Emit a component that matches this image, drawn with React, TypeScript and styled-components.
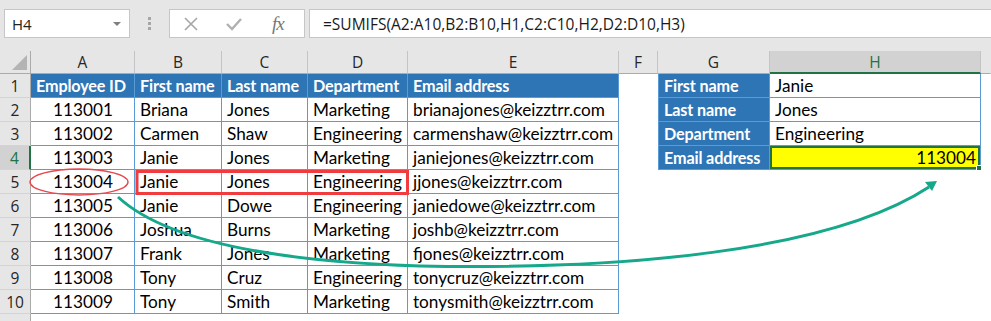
import React from "react";
import styled, { createGlobalStyle } from "styled-components";

const GlobalStyle = createGlobalStyle`
  html, body {
    margin: 0;
    padding: 0;
    background: #ffffff;
  }
`;

const Page = styled.div`
  position: relative;
  width: 991px;
  height: 321px;
  overflow: hidden;
  background: #ffffff;
`;

const FormulaBar = styled.div`
  height: 51px;
  box-sizing: border-box;
  padding: 9px 0 0 4px;
  background: #e6e6e6;
  display: flex;
  align-items: flex-start;
  font-family: "Open Sans", "Noto Sans", sans-serif;
`;

const NameBox = styled.div`
  width: 126px;
  height: 29px;
  box-sizing: border-box;
  padding: 0 8px 0 7px;
  background: #ffffff;
  border: 1px solid #c6c6c6;
  display: flex;
  align-items: center;
  justify-content: space-between;
  font-size: 15px;
  color: #222222;
`;

const Caret = styled.span`
  width: 0;
  height: 0;
  border-left: 4px solid transparent;
  border-right: 4px solid transparent;
  border-top: 4px solid #7f7f7f;
`;

const Grip = styled.div`
  width: 39px;
  height: 29px;
  display: flex;
  flex-direction: column;
  align-items: center;
  justify-content: center;
  gap: 2px;
  span {
    width: 3px;
    height: 3px;
    background: #a6a6a6;
  }
`;

const FxBox = styled.div`
  width: 136px;
  height: 29px;
  box-sizing: border-box;
  background: #ffffff;
  border: 1px solid #c6c6c6;
  display: flex;
  align-items: center;
  gap: 28px;
  padding-left: 14px;
`;

const FxLabel = styled.span`
  font-family: "Liberation Serif", serif;
  font-style: italic;
  font-size: 19px;
  color: #777777;
  letter-spacing: -1px;
  margin-left: 2px;
`;

const FormulaInput = styled.div`
  flex: 1;
  height: 29px;
  margin-left: 4px;
  box-sizing: border-box;
  padding-left: 13px;
  background: #ffffff;
  border: 1px solid #c6c6c6;
  border-right: none;
  display: flex;
  align-items: center;
  font-size: 15.5px;
  color: #1a1a1a;
  white-space: nowrap;
`;

const Sheet = styled.div`
  display: grid;
  grid-template-columns: 31px 104px 87px 86px 100px 211px 39px 112px 211px 10px;
  grid-template-rows: 23px repeat(11, 24px);
  font-family: Lato, "Liberation Sans", sans-serif;
  font-size: 17.2px;
`;

const Corner = styled.div`
  position: relative;
  background: #e6e6e6;
  border-right: 1px solid #ababab;
  border-bottom: 1px solid #ababab;
  &::after {
    content: "";
    position: absolute;
    right: 3px;
    bottom: 3px;
    border-left: 15px solid transparent;
    border-bottom: 15px solid #b4b4b4;
  }
`;

const ColHead = styled.div<{ $selected?: boolean; $last?: boolean }>`
  box-sizing: border-box;
  display: flex;
  align-items: center;
  justify-content: center;
  font-family: "Open Sans", "Noto Sans", sans-serif;
  font-size: 15.5px;
  background: ${(p) => (p.$selected ? "#d2d2d2" : "#e6e6e6")};
  color: ${(p) => (p.$selected ? "#217346" : "#262626")};
  border-right: 1px solid ${(p) => (p.$last ? "transparent" : "#c4c4c4")};
  border-bottom: ${(p) => (p.$selected ? "2px solid #217346" : "1px solid #ababab")};
`;

const RowHead = styled.div<{ $selected?: boolean }>`
  box-sizing: border-box;
  display: flex;
  align-items: center;
  justify-content: center;
  font-family: "Open Sans", "Noto Sans", sans-serif;
  font-size: 15.5px;
  background: ${(p) => (p.$selected ? "#d2d2d2" : "#e6e6e6")};
  color: ${(p) => (p.$selected ? "#217346" : "#262626")};
  border-bottom: 1px solid #d4d4d4;
  border-right: ${(p) => (p.$selected ? "2px solid #217346" : "1px solid #ababab")};
`;

type Kind = "head" | "data" | "blank";

const Cell = styled.div<{
  $kind: Kind;
  $align?: "left" | "center" | "right";
  $edge?: boolean;
  $fill?: string;
  $active?: boolean;
}>`
  position: relative;
  box-sizing: border-box;
  display: flex;
  align-items: center;
  padding: 0 4px 0 5px;
  white-space: nowrap;
  overflow: visible;
  justify-content: ${(p) =>
    p.$align === "center" ? "center" : p.$align === "right" ? "flex-end" : "flex-start"};
  background: ${(p) => (p.$fill ? p.$fill : p.$kind === "head" ? "#2e75b6" : "#ffffff")};
  color: ${(p) => (p.$kind === "head" ? "#ffffff" : "#000000")};
  font-weight: ${(p) => (p.$kind === "head" ? 700 : 400)};
  font-size: ${(p) => (p.$kind === "head" ? "16.2px" : "inherit")};
  letter-spacing: ${(p) => (p.$kind === "head" ? "-0.15px" : "normal")};
  border-right: 1px solid ${(p) => (p.$kind === "blank" ? "transparent" : "#5b9bd5")};
  border-bottom: 1px solid ${(p) => (p.$kind === "blank" ? "transparent" : "#5b9bd5")};
  border-left: ${(p) => (p.$edge ? "1px solid #5b9bd5" : "none")};
  box-shadow: ${(p) => (p.$active ? "inset 0 0 0 2px #217346, 1px 1px 0 0 #217346" : "none")};
`;

const FillHandle = styled.span`
  position: absolute;
  right: -4px;
  bottom: -4px;
  width: 6px;
  height: 6px;
  background: #217346;
  border: 1px solid #ffffff;
`;

const Overlay = styled.svg`
  position: absolute;
  left: 0;
  top: 0;
  pointer-events: none;
`;

const columns = ["A", "B", "C", "D", "E", "F", "G", "H"];

const employees = [
  ["113001", "Briana", "Jones", "Marketing", "brianajones@keizztrr.com"],
  ["113002", "Carmen", "Shaw", "Engineering", "carmenshaw@keizztrr.com"],
  ["113003", "Janie", "Jones", "Marketing", "janiejones@keizztrr.com"],
  ["113004", "Janie", "Jones", "Engineering", "jjones@keizztrr.com"],
  ["113005", "Janie", "Dowe", "Engineering", "janiedowe@keizztrr.com"],
  ["113006", "Joshua", "Burns", "Marketing", "joshb@keizztrr.com"],
  ["113007", "Frank", "Jones", "Marketing", "fjones@keizztrr.com"],
  ["113008", "Tony", "Cruz", "Engineering", "tonycruz@keizztrr.com"],
  ["113009", "Tony", "Smith", "Marketing", "tonysmith@keizztrr.com"],
];

const headers = ["Employee ID", "First name", "Last name", "Department", "Email address"];

const lookup = [
  ["First name", "Janie"],
  ["Last name", "Jones"],
  ["Department", "Engineering"],
  ["Email address", "113004"],
];

function XIcon() {
  return (
    <svg width="14" height="14" viewBox="0 0 14 14">
      <path d="M1 1 L13 13 M13 1 L1 13" stroke="#a6a6a6" strokeWidth="1.6" fill="none" />
    </svg>
  );
}

function CheckIcon() {
  return (
    <svg width="16" height="14" viewBox="0 0 16 14">
      <path d="M1 7 L6 12 L15 2" stroke="#b0b0b0" strokeWidth="2.4" fill="none" />
    </svg>
  );
}

export default function App() {
  const rows: React.ReactNode[] = [];

  for (let r = 1; r <= 11; r++) {
    const emp = r >= 2 && r <= 10 ? employees[r - 2] : null;
    const look = r <= 4 ? lookup[r - 1] : null;
    // row 11 only peeks in at the bottom edge, its number is out of view
    rows.push(
      <RowHead key={`rh${r}`} $selected={r === 4}>
        {r <= 10 ? r : ""}
      </RowHead>
    );
    for (let c = 0; c < 5; c++) {
      if (r === 1) {
        rows.push(
          <Cell key={`c${r}-${c}`} $kind="head">
            {headers[c]}
          </Cell>
        );
      } else if (emp) {
        rows.push(
          <Cell key={`c${r}-${c}`} $kind="data" $align={c === 0 ? "center" : "left"}>
            {emp[c]}
          </Cell>
        );
      } else {
        rows.push(<Cell key={`c${r}-${c}`} $kind="blank" />);
      }
    }
    rows.push(<Cell key={`f${r}`} $kind="blank" />);
    if (look) {
      const active = r === 4;
      rows.push(
        <Cell key={`g${r}`} $kind="head" $edge>
          {look[0]}
        </Cell>,
        <Cell
          key={`h${r}`}
          $kind="data"
          $align={active ? "right" : "left"}
          $fill={active ? "#ffff00" : undefined}
          $active={active}
        >
          {look[1]}
          {active && <FillHandle />}
        </Cell>
      );
    } else {
      rows.push(<Cell key={`g${r}`} $kind="blank" />, <Cell key={`h${r}`} $kind="blank" />);
    }
    rows.push(<Cell key={`x${r}`} $kind="blank" />);
  }

  return (
    <Page>
      <GlobalStyle />
      <FormulaBar>
        <NameBox>
          H4
          <Caret />
        </NameBox>
        <Grip>
          <span />
          <span />
          <span />
        </Grip>
        <FxBox>
          <XIcon />
          <CheckIcon />
          <FxLabel>fx</FxLabel>
        </FxBox>
        <FormulaInput>=SUMIFS(A2:A10,B2:B10,H1,C2:C10,H2,D2:D10,H3)</FormulaInput>
      </FormulaBar>
      <Sheet>
        <Corner />
        {columns.map((col) => (
          <ColHead key={col} $selected={col === "H"}>
            {col}
          </ColHead>
        ))}
        <ColHead $last />
        {rows}
      </Sheet>
      <Overlay width="991" height="321" viewBox="0 0 991 321">
        <ellipse cx="79" cy="182" rx="49" ry="13" fill="none" stroke="#e5484d" strokeWidth="1.4" />
        <rect x="137" y="171.5" width="270.5" height="22" fill="none" stroke="#f03c3f" strokeWidth="3" />
        <path
          d="M118 197 C170 245 290 262 420 266 C620 270 830 252 929 187"
          fill="none"
          stroke="#15a88a"
          strokeWidth="3"
        />
        <polygon points="937,181 932,191 925,182" fill="#15a88a" />
      </Overlay>
    </Page>
  );
}
